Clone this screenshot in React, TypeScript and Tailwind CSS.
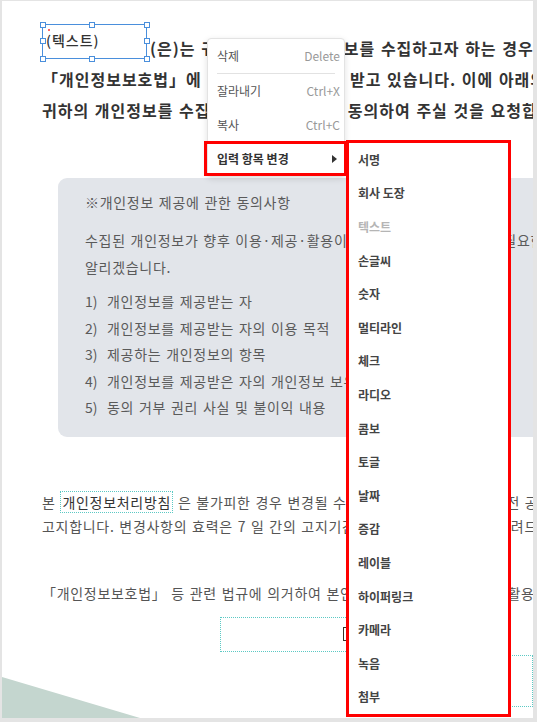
const menuItems = [
  { label: "삭제", key: "Delete" },
  { label: "잘라내기", key: "Ctrl+X" },
  { label: "복사", key: "Ctrl+C" },
]

const fieldTypes = [
  "서명",
  "회사 도장",
  "텍스트",
  "손글씨",
  "숫자",
  "멀티라인",
  "체크",
  "라디오",
  "콤보",
  "토글",
  "날짜",
  "증감",
  "레이블",
  "하이퍼링크",
  "카메라",
  "녹음",
  "첨부",
]

const consentItems = [
  "개인정보를 제공받는 자",
  "개인정보를 제공받는 자의 이용 목적",
  "제공하는 개인정보의 항목",
  "개인정보를 제공받은 자의 개인정보 보유 및 이용 기간",
  "동의 거부 권리 사실 및 불이익 내용",
]

function Handle({ className }: { className: string }) {
  return <div className={"absolute h-[6px] w-[6px] border border-[#4a8fdc] bg-white " + className} />
}

function SelectedField() {
  return (
    <div className="relative h-[35px] w-[105px] shrink-0 border border-[#4a8fdc]">
      <div className="absolute left-[5px] top-[4px] h-[2px] w-[2px] rounded-full bg-[#f33]" />
      <div className="pl-[3px] pt-[5px] text-[14px] font-medium leading-[20px] text-[#333]">(텍스트)</div>
      <Handle className="-left-[3.5px] -top-[3.5px]" />
      <Handle className="left-[46px] -top-[3.5px]" />
      <Handle className="-right-[3.5px] -top-[3.5px]" />
      <Handle className="-left-[3.5px] top-[13px]" />
      <Handle className="-right-[3.5px] top-[13px]" />
      <Handle className="-left-[3.5px] -bottom-[3.5px]" />
      <Handle className="left-[46px] -bottom-[3.5px]" />
      <Handle className="-right-[3.5px] -bottom-[3.5px]" />
    </div>
  )
}

export default function App() {
  return (
    <div className="relative h-[722px] w-[537px] overflow-hidden bg-[#e4e4e4] font-['Noto_Sans_CJK_KR',sans-serif]">
      {/* document page */}
      <div className="relative ml-[2px] mt-[1px] h-[717px] w-[531px] overflow-hidden bg-white">
        <div className="pl-[40px] pt-[23px]">
          {/* heading */}
          <div className="whitespace-nowrap text-[16px] font-bold tracking-[1px] text-[#333] [word-spacing:1px]">
            <div className="flex items-start">
              <SelectedField />
              <span className="ml-[3px] mt-[9px] leading-[31px]">
                (은)는 귀하의 모든 개인 정보를 수집하고자 하는 경우에는
              </span>
            </div>
            <div className="leading-[31px]">
              「개인정보보호법」에 따라 귀하의 동의를 받고 있습니다. 이에 아래의 내용을 확인하시고
            </div>
            <div className="leading-[31px]">
              귀하의 개인정보를 수집·이용하는 것에 꼭 동의하여 주실 것을 요청합니다.
            </div>
          </div>

          {/* consent box */}
          <div className="ml-[16px] mt-[52px] w-[520px] whitespace-nowrap rounded-[9px] bg-[#e2e5ea] pb-[16px] pl-[27px] pt-[13px] text-[14px] tracking-[0.7px] text-[#5a5a5a] [word-spacing:1px]">
            <div className="leading-[22px]">※개인정보 제공에 관한 동의사항</div>
            <div className="mt-[14px] leading-[27px]">
              <div>수집된 개인정보가 향후 이용·제공·활용이 되는 경우, 다음 사항 중 필요한 내용을</div>
              <div>알리겠습니다.</div>
            </div>
            <ol className="mt-[7px]">
              {consentItems.map((t, i) => (
                <li key={t} className="flex leading-[26.5px]">
                  <span className="w-[22px] shrink-0 tracking-normal">{i + 1})</span>
                  <span>{t}</span>
                </li>
              ))}
            </ol>
          </div>

          {/* policy paragraph */}
          <div className="mt-[53px] whitespace-nowrap text-[14px] leading-[24px] tracking-[0.7px] text-[#555] [word-spacing:1px]">
            <div>
              본{" "}
              <span className="border border-dotted border-[#5cc9c4] px-[1px] text-[#333]">개인정보처리방침</span>{" "}
              은 불가피한 경우 변경될 수 있으며, 변경되는 경우 사전 공지합니다.
            </div>
            <div>고지합니다. 변경사항의 효력은 7 일 간의 고지기간이 지난 후에 발생함을 알려드립니다.</div>
          </div>

          <div className="mt-[43px] whitespace-nowrap text-[14px] leading-[24px] tracking-[0.7px] text-[#555] [word-spacing:1px]">
            「개인정보보호법」 등 관련 법규에 의거하여 본인 개인 정보를 수집·이용·활용하는 것에
          </div>

          {/* signature field */}
          <div className="ml-[178px] mt-[12px] flex h-[35px] w-[250px] items-center border border-dotted border-[#5cc9c4] pl-[122px]">
            <div className="h-[14px] w-[8px] border-y border-l border-[#3a3027]" />
          </div>

          <div className="mt-[16px] flex items-start">
            <div className="ml-[338px] h-[35px] w-[152px] border border-dotted border-[#5cc9c4]" />
            <div className="-mt-[13px] h-[52px] w-[60px] border border-dotted border-[#5cc9c4]" />
          </div>
        </div>

        {/* decorative corner */}
        <svg className="absolute bottom-0 left-0" width="138" height="41" viewBox="0 0 138 41">
          <polygon points="0,0 138,41 0,41" fill="#c4d6cf" />
        </svg>
      </div>

      {/* context menu */}
      <div className="absolute left-[207px] top-[38px] w-[138px] rounded-[4px] border border-[#e3e3e3] bg-white shadow-[0_2px_6px_rgba(0,0,0,0.12)]">
        {menuItems.map((m, i) => (
          <div key={m.label}>
            <div className="flex h-[34px] items-center justify-between pl-[9px] pr-[4px] text-[12px]">
              <span className="text-[#555]">{m.label}</span>
              <span className="text-[#999]">{m.key}</span>
            </div>
            {i === 0 && <div className="mx-[9px] h-px bg-[#e2e2e2]" />}
          </div>
        ))}
        <div className="flex h-[34px] items-center justify-between pl-[9px] pr-[7px] text-[12px]">
          <span className="font-semibold text-[#333]">입력 항목 변경</span>
          <svg width="5" height="8" viewBox="0 0 5 8">
            <polygon points="0,0 5,4 0,8" fill="#333" />
          </svg>
        </div>
      </div>

      {/* highlight of active item */}
      <div className="absolute left-[204px] top-[141px] h-[35px] w-[143px] border-[3px] border-[#f00]" />

      {/* submenu */}
      <div className="absolute left-[346px] top-[140px] h-[577px] w-[165px] border-[3px] border-[#f00] bg-white">
        {fieldTypes.map((f) => (
          <div
            key={f}
            className={
              "flex h-[33.6px] items-center pl-[9px] text-[12px] font-semibold " +
              (f === "텍스트" ? "text-[#b5b5b5]" : "text-[#444]")
            }
          >
            {f}
          </div>
        ))}
      </div>
    </div>
  )
}
